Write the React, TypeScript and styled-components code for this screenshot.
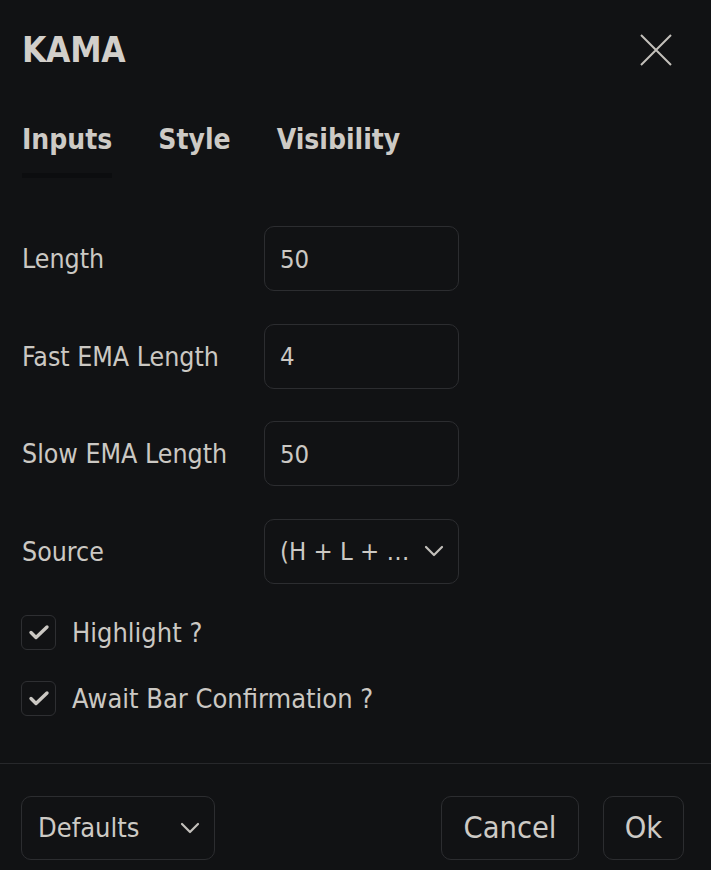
import React from "react";
import styled, { createGlobalStyle } from "styled-components";

const Global = createGlobalStyle`
  html, body {
    margin: 0;
    padding: 0;
    background: #111214;
  }
  body {
    font-family: "DejaVu Sans Condensed", "DejaVu Sans", sans-serif;
    font-stretch: condensed;
    color: #cbc8c3;
  }
  * { box-sizing: border-box; }
`;

const Dialog = styled.div`
  width: 711px;
  height: 870px;
  background: #111214;
  display: flex;
  flex-direction: column;
  overflow: hidden;
`;

const Header = styled.div`
  height: 100px;
  padding: 0 38px 0 22px;
  display: flex;
  align-items: center;
  justify-content: space-between;
`;

const Title = styled.h1`
  margin: 0;
  font-size: 35px;
  font-weight: 700;
  color: #d2cfca;
  letter-spacing: -0.3px;
`;

const CloseButton = styled.button`
  width: 34px;
  height: 34px;
  padding: 0;
  border: none;
  background: transparent;
  display: flex;
  align-items: center;
  justify-content: center;
  cursor: pointer;
`;

const Tabs = styled.div`
  display: flex;
  gap: 46px;
  padding: 0 22px;
`;

const Tab = styled.div<{ $active?: boolean }>`
  height: 78px;
  padding-top: 5px;
  display: flex;
  align-items: center;
  font-size: 28px;
  font-weight: 700;
  color: #cdcac5;
  border-bottom: 5px solid ${(p) => (p.$active ? "#0c0d0f" : "transparent")};
`;

const Form = styled.div`
  padding: 48px 22px 0 22px;
  display: flex;
  flex-direction: column;
`;

const Fields = styled.div`
  display: grid;
  grid-template-columns: 242px 195px;
  grid-auto-rows: 65px;
  row-gap: 32.5px;
  align-items: center;
`;

const Label = styled.div`
  font-size: 26.5px;
  color: #cbc8c3;
  white-space: nowrap;
`;

const Field = styled.div`
  height: 65px;
  border: 1px solid #2c2d30;
  border-radius: 10px;
  display: flex;
  align-items: center;
  justify-content: space-between;
  padding: 0 14px 0 15px;
  font-size: 25.5px;
  color: #cbc8c3;
  white-space: nowrap;
`;

const Checks = styled.div`
  margin-top: 31px;
  display: flex;
  flex-direction: column;
  gap: 31px;
`;

const CheckRow = styled.div`
  display: flex;
  align-items: center;
  gap: 16px;
  height: 35px;
`;

const Box = styled.div`
  width: 35px;
  height: 35px;
  margin-left: -1px;
  border: 1px solid #2e2f32;
  border-radius: 6px;
  display: flex;
  align-items: center;
  justify-content: center;
`;

const CheckText = styled.span`
  font-size: 27px;
  color: #cbc8c3;
  white-space: nowrap;
`;

const Divider = styled.div`
  margin-top: 47px;
  height: 1px;
  background: #27282b;
`;

const Footer = styled.div`
  padding: 32px 27px 0 21px;
  display: flex;
  align-items: center;
  justify-content: space-between;
`;

const Actions = styled.div`
  display: flex;
  gap: 24px;
`;

const FooterButton = styled.button<{ $width: number }>`
  width: ${(p) => p.$width}px;
  height: 64px;
  border: 1px solid #2c2d30;
  border-radius: 10px;
  background: transparent;
  color: #cdcac5;
  font-family: "DejaVu Sans Condensed", "DejaVu Sans", sans-serif;
  font-stretch: condensed;
  font-size: 30.5px;
  display: flex;
  align-items: center;
  justify-content: center;
  padding: 0;
  white-space: nowrap;
`;

const DefaultsButton = styled(FooterButton)`
  justify-content: space-between;
  padding: 0 14px 0 16px;
  font-size: 27px;
`;

const Chevron = () => (
  <svg width="20" height="12" viewBox="0 0 20 12" fill="none">
    <path d="M2 2l8 8 8-8" stroke="#c3c0bb" strokeWidth="2.2" strokeLinecap="round" strokeLinejoin="round" />
  </svg>
);

const Check = () => (
  <svg width="22" height="18" viewBox="0 0 22 18" fill="none">
    <path d="M3 9.5l5 5L19 4" stroke="#cbc8c3" strokeWidth="3.4" strokeLinecap="round" strokeLinejoin="round" />
  </svg>
);

const fields = [
  { label: "Length", value: "50" },
  { label: "Fast EMA Length", value: "4" },
  { label: "Slow EMA Length", value: "50" },
];

export default function App() {
  return (
    <Dialog>
      <Global />
      <Header>
        <Title>KAMA</Title>
        <CloseButton aria-label="Close">
          <svg width="34" height="34" viewBox="0 0 34 34" fill="none">
            <path d="M2 2l30 30M32 2L2 32" stroke="#c3c0bb" strokeWidth="2" />
          </svg>
        </CloseButton>
      </Header>
      <Tabs>
        <Tab $active>Inputs</Tab>
        <Tab>Style</Tab>
        <Tab>Visibility</Tab>
      </Tabs>
      <Form>
        <Fields>
          {fields.map((f) => (
            <React.Fragment key={f.label}>
              <Label>{f.label}</Label>
              <Field>{f.value}</Field>
            </React.Fragment>
          ))}
          <Label>Source</Label>
          <Field>
            <span>(H + L + …</span>
            <Chevron />
          </Field>
        </Fields>
        <Checks>
          <CheckRow>
            <Box><Check /></Box>
            <CheckText>Highlight ?</CheckText>
          </CheckRow>
          <CheckRow>
            <Box><Check /></Box>
            <CheckText>Await Bar Confirmation ?</CheckText>
          </CheckRow>
        </Checks>
      </Form>
      <Divider />
      <Footer>
        <DefaultsButton $width={194}>
          <span>Defaults</span>
          <Chevron />
        </DefaultsButton>
        <Actions>
          <FooterButton $width={138}>Cancel</FooterButton>
          <FooterButton $width={81}>Ok</FooterButton>
        </Actions>
      </Footer>
    </Dialog>
  );
}
